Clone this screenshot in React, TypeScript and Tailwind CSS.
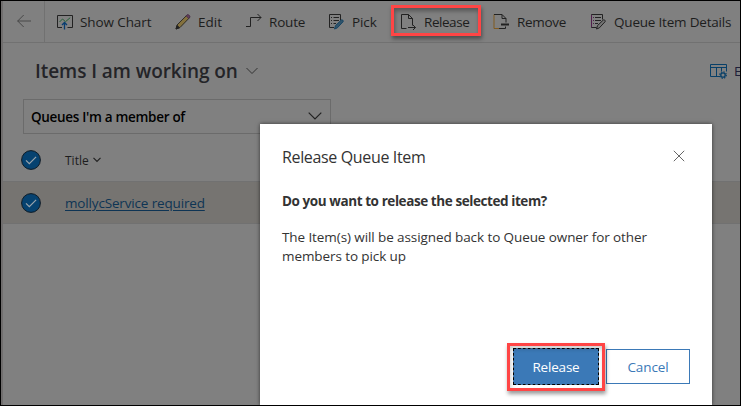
import type { ReactNode } from "react";

function Icon({ w = 16, h = 16, className = "", children }: { w?: number; h?: number; className?: string; children: ReactNode }) {
  return (
    <svg width={w} height={h} viewBox={`0 0 ${w} ${h}`} fill="none" stroke="#222" className={`block shrink-0 ${className}`}>
      {children}
    </svg>
  );
}

function CheckCircle() {
  return (
    <Icon w={20} h={20}>
      <circle cx="10" cy="10" r="9.4" fill="#064270" stroke="#101c26" />
      <path d="M5 10.3l3.3 3.4 6.8-6.9" stroke="#9aa4ac" strokeWidth="1.2" />
    </Icon>
  );
}

function Command({ className, children }: { className: string; children: ReactNode }) {
  return <div className={`flex shrink-0 items-center whitespace-nowrap ${className}`}>{children}</div>;
}

export default function App() {
  return (
    <div className="relative h-[406px] w-[741px] overflow-hidden border border-black bg-[#808080] font-['Open_Sans','Noto_Sans',sans-serif] text-[13.5px] leading-5 text-[#1d1d1d]">
      <div className="flex h-full flex-col border-l-2 border-[#706e6e]">
        <div className="flex h-[42px] shrink-0 border-b border-[#717171]">
          <div className="flex w-[42px] shrink-0 items-center border-r border-[#717171] pl-[14px]">
            <Icon w={14} h={14} className="-mt-px">
              <path d="M.5 7H14M6.7 1L.7 7l6 6" stroke="#484848" />
            </Icon>
          </div>
          <div className="flex pl-3">
            <Command className="w-[118px]">
              <Icon>
                <path d="M5 13.5H.5v-12h15v12h-5" />
                <path d="M2.5 8l3-3 3 2.7 4.7-4" stroke="#246238" />
                <path d="M7.5 15.5v-7M5 11l2.5-2.5L10 11" stroke="#073d70" strokeWidth="1.3" />
              </Icon>
              <span className="ml-[7px] tracking-[-0.1px]">Show Chart</span>
            </Command>
            <Command className="w-[71px]">
              <Icon>
                <path d="M1 15l1-4L11.7 1.4c1-1 3.6 1.2 2.6 2.5L5 13.5z" fill="#84713d" stroke="#302c24" />
                <path d="M11.2 1.8l1.2-1c1.2-.5 3 1.2 2.4 2.5l-1.2 1z" fill="#66415e" stroke="#49304a" />
                <path d="M1 15l1.2-3.5 2.2 2.2z" fill="#222" />
              </Icon>
              <span className="ml-[7px]">Edit</span>
            </Command>
            <Command className="w-[83px]">
              <Icon>
                <path d="M0 12.5h4.5v-9H15M11.5 0L15 3.5 11.5 7" />
              </Icon>
              <span className="ml-[7px] tracking-[-0.2px]">Route</span>
            </Command>
            <Command className="w-[71px]">
              <Icon>
                <path d="M5 13.5H.5V.5h11v6M2 3.5h1M4.5 3.5H10M2 6.5h1M4.5 6.5H10M2 9.5h1M4.5 9.5H7" />
                <path d="M5.5 15l1-3.4L12.3 6c.8-.7 2.5.6 1.8 1.7L8.3 13.9z" fill="#30546b" stroke="#174564" />
              </Icon>
              <span className="ml-[7px] tracking-[-0.1px]">Pick</span>
            </Command>
            <Command className="w-[93px]">
              <Icon>
                <path d="M6.5 14.5H1.5V.5h7l4 4v7M8.5.5v4h4M8 13.5h7.5M13 11l2.5 2.5L13 16" />
              </Icon>
              <span className="ml-2 tracking-[-0.45px]">Release</span>
            </Command>
            <Command className="w-[98px]">
              <Icon>
                <path d="M6 14.5H1V.5h1" stroke="#805a20" />
                <path d="M1 .5h8l4 4v4M9 .5v4h4M6 14.5h6.5v-2" />
                <path d="M8 10.5h8" strokeWidth="2" />
              </Icon>
              <span className="ml-2 tracking-[-0.3px]">Remove</span>
            </Command>
            <Command className="w-[145px]">
              <Icon>
                <path d="M5.5 13.5H.5V.5h11v5M4 3.5h6M4 6.5h6M4 9.5h3" />
                <path d="M.5 13V1M2 3.5h1M2 6.5h1M2 9.5h1" stroke="#50204c" />
                <path d="M5.5 15l1-3.4L12.3 6c.8-.7 2.5.6 1.8 1.7L8.3 13.9z" fill="#757575" />
              </Icon>
              <span className="ml-[7px] tracking-[-0.2px]">Queue Item Details</span>
            </Command>
          </div>
        </div>

        <div className="flex h-[56px] shrink-0 items-center overflow-hidden pl-8">
          <h1 className="whitespace-nowrap pb-px text-[19px] font-semibold leading-7 tracking-[-0.06px] text-[#242428]">Items I am working on</h1>
          <Icon w={12} h={8} className="ml-2">
            <path d="M.5 1l5.5 5.5L11.5 1" stroke="#333" />
          </Icon>
          <Icon w={18} h={16} className="ml-auto mr-[6px]">
            <path d="M10 13.5H.5V1.5h16v7M.5 4.5h16M6.5 4.5v9M11.5 4.5V8" stroke="#073f68" />
            <circle cx="13" cy="12" r="2.2" stroke="#073f68" strokeWidth="1.3" />
            <circle cx="13" cy="12" r="3.3" stroke="#073f68" strokeWidth="1.2" strokeDasharray="1.3 1.3" />
          </Icon>
          <span className="w-[6px] overflow-hidden text-[#20203a]">E</span>
        </div>

        <div className="ml-5 flex h-[35px] w-[308px] shrink-0 items-center justify-between border border-[#6b6b6b] pl-[7px] pr-2">
          <span className="whitespace-nowrap pt-px font-semibold tracking-[-0.31px] text-black">Queues I'm a member of</span>
          <Icon w={14} h={8} className="-mt-0.5">
            <path d="M.7.7L7 7 13.3.7" strokeWidth="1.2" />
          </Icon>
        </div>

        <div className="flex h-[47px] shrink-0 items-center pl-[18px] pt-[5px]">
          <CheckCircle />
          <span className="ml-[24px] pt-px text-xs font-medium">Title</span>
          <Icon w={8} h={6} className="ml-1">
            <path d="M.5.8L4 4.5 7.5.8" strokeWidth="1.2" />
          </Icon>
        </div>
        <div className="flex h-[43px] shrink-0 items-center border-y border-[#717171] bg-[#767471] pl-[18px]">
          <CheckCircle />
          <a className="ml-[24px] tracking-[-0.16px] text-[#0e3454] underline underline-offset-2">mollycService required</a>
        </div>
      </div>

      <div className="absolute left-[390px] top-[4px] h-[31px] w-[90px] border-[3px] border-[#ff4545] shadow-[1px_3px_4px_#0006,inset_1px_3px_4px_#0005]" />

      <section className="absolute left-[259px] top-[123px] flex h-[281px] w-[452px] flex-col bg-white pl-[22px] pr-[22px] text-[#333] shadow-[0_0_4px_#0009]">
        <div className="flex h-[66px] items-center justify-between pr-[5px]">
          <h2 className="text-[16px] leading-6 tracking-[-0.35px]">Release Queue Item</h2>
          <Icon w={12} h={12} className="-mt-0.5">
            <path d="M.8.8l10.4 10.4M11.2.8L.8 11.2" stroke="#666" />
          </Icon>
        </div>
        <p className="mt-px whitespace-nowrap font-bold tracking-[-0.42px]">Do you want to release the selected item?</p>
        <p className="mt-[17px] whitespace-nowrap text-[13.5px] leading-[19px] tracking-[-0.09px]">
          The Item(s) will be assigned back to Queue owner for other<br />members to pick up
        </p>
        <div className="mb-5 mt-auto flex items-center justify-end gap-[7px]">
          <div className="relative">
            <button className="block h-[37px] w-[86px] border border-dashed border-white bg-[#3b79b7] tracking-[-0.2px] text-white outline-dashed outline-1 -outline-offset-1 outline-black">Release</button>
            <div className="pointer-events-none absolute -inset-x-[6px] -bottom-[6px] -top-[5px] border-[3px] border-[#ff4545] shadow-[1px_3px_4px_#0006,inset_1px_3px_4px_#0003]" />
          </div>
          <button className="h-[35px] w-[84px] border border-[#3b79b7] tracking-[-0.1px] text-[#3b79b7]">Cancel</button>
        </div>
      </section>
    </div>
  );
}
